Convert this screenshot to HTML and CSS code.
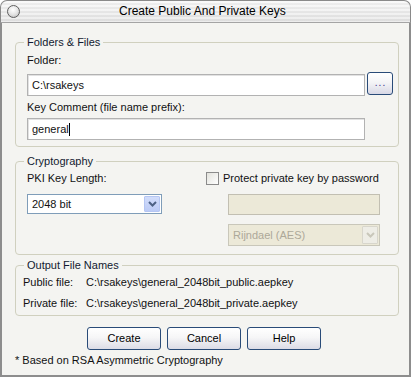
FILE: index.html
```html
<!DOCTYPE html>
<html>
<head>
<meta charset="utf-8">
<link rel="stylesheet" href="styles.css">
</head>
<body>
<div class="window">
  <div class="titlebar">
    <span class="orb"></span>
    <span class="title">Create Public And Private Keys</span>
  </div>
  <div class="content">
    <fieldset class="group g-files">
      <legend>Folders &amp; Files</legend>
      <div class="label l-folder">Folder:</div>
      <div class="row">
        <div class="input wide">C:\rsakeys</div>
        <div class="browse">...</div>
      </div>
      <div class="label l-comment">Key Comment (file name prefix):</div>
      <div class="input wide">general<span class="caret"></span></div>
    </fieldset>

    <fieldset class="group g-crypto">
      <legend>Cryptography</legend>
      <div class="cols">
        <div class="col-left">
          <div class="label">PKI Key Length:</div>
          <div class="select sel-len">
            <span class="sel-text">2048 bit</span>
            <span class="drop"><svg width="9" height="6" viewBox="0 0 9 6"><path d="M1 1 L4.5 4.5 L8 1" fill="none" stroke="#4d6185" stroke-width="2"/></svg></span>
          </div>
        </div>
        <div class="col-right">
          <div class="check"><span class="box"></span><span>Protect private key by password</span></div>
          <div class="input disabled pwd"></div>
          <div class="select disabled sel-alg">
            <span class="sel-text">Rijndael (AES)</span>
            <span class="drop"><svg width="9" height="6" viewBox="0 0 9 6"><path d="M1 1 L4.5 4.5 L8 1" fill="none" stroke="#c9c7ba" stroke-width="2"/></svg></span>
          </div>
        </div>
      </div>
    </fieldset>

    <fieldset class="group g-out">
      <legend>Output File Names</legend>
      <div class="out-row"><span class="out-label">Public file:</span><span>C:\rsakeys\general_2048bit_public.aepkey</span></div>
      <div class="out-row r2"><span class="out-label">Private file:</span><span>C:\rsakeys\general_2048bit_private.aepkey</span></div>
    </fieldset>

    <div class="buttons">
      <div class="btn">Create</div>
      <div class="btn">Cancel</div>
      <div class="btn">Help</div>
    </div>
    <div class="note">* Based on RSA Asymmetric Cryptography</div>
  </div>
</div>
</body>
</html>
```

FILE: styles.css
```css
* { box-sizing: border-box; }
html, body { margin: 0; padding: 0; background: #ffffff; }
body {
  font-family: "Liberation Sans", Arial, sans-serif;
  font-size: 11px;
  line-height: 13px;
  color: #111;
}
.window {
  width: 411px;
  height: 377px;
  display: flex;
  flex-direction: column;
}
.titlebar {
  height: 23px;
  flex: none;
  display: flex;
  align-items: center;
  padding-left: 6px;
  border: 1px solid #8a8a8a;
  border-bottom-color: #a4a4a4;
  border-radius: 7px 7px 0 0;
  background:
    linear-gradient(rgba(255,255,255,0.35), rgba(0,0,0,0.04)),
    repeating-linear-gradient(#f6f6f6 0 2px, #e6e6e6 2px 4px);
}
.orb {
  width: 13px;
  height: 13px;
  border-radius: 50%;
  border: 1.5px solid #5e5e5e;
  background: radial-gradient(circle at 45% 35%, #ffffff 0, #e4e4e4 50%, #b4b4b4 100%);
}
.title {
  margin-left: 99px;
  font-size: 12px;
  color: #000;
}
.content {
  flex: 1;
  border: 0 solid #8d8d8d;
  border-width: 0 2px 2px 2px;
  background: #f4f4f1;
  padding: 0 10px 0 13px;
}
.group {
  margin: 0;
  border: 1px solid #d0d0bf;
  border-radius: 4px;
  min-width: 0;
}
.group legend {
  padding: 0 3px;
  margin-left: -3px;
  line-height: 13px;
  color: #121a30;
}
.g-files {
  margin-top: 13px;
  padding: 5px 4px 6px 11px;
}
.label { height: 13px; }
.l-folder { margin-bottom: 5px; }
.l-comment { margin: 5px 0 4px; }
.row { display: flex; align-items: flex-start; }
.input {
  height: 22px;
  background: #fff;
  border: 1px solid #b2b2b2;
  box-shadow: inset 1px 1px 0 #e2e2e2;
  padding: 4px 4px 0 4px;
  white-space: nowrap;
}
.wide { width: 338px; }
.row .input { margin-top: 2px; }
.caret {
  display: inline-block;
  width: 1px;
  height: 13px;
  background: #000;
  vertical-align: -3px;
}
.browse {
  width: 26px;
  height: 23px;
  margin-left: 2px;
  border: 1px solid #294b78;
  border-radius: 3px;
  background: linear-gradient(#ffffff 0, #f4f4f6 45%, #d8d8e6 100%);
  color: #3c2f86;
  text-align: center;
  line-height: 20px;
  font-size: 10px;
  letter-spacing: 1px;
  padding-left: 1px;
}
.g-crypto {
  margin-top: 8px;
  padding: 4px 17px 8px 11px;
}
.cols {
  display: grid;
  grid-template-columns: 179px 1fr;
}
.col-left .label { margin-bottom: 9px; }
.select {
  display: flex;
  align-items: center;
  border: 1px solid #7f9db9;
  background: #fff;
  padding: 1px;
}
.sel-len { width: 135px; height: 20px; }
.sel-text { flex: 1; padding-left: 3px; }
.drop {
  width: 16px;
  align-self: stretch;
  display: flex;
  align-items: center;
  justify-content: center;
  background: linear-gradient(#d2ddfb, #bccbf6);
  border: 1px solid #b5c6f3;
  border-radius: 1px;
}
.check {
  display: flex;
  align-items: center;
  height: 13px;
  margin-bottom: 9px;
}
.box {
  width: 13px;
  height: 13px;
  border: 1px solid #8b8b8b;
  background: linear-gradient(135deg, #e2e2dc, #ffffff);
  margin-right: 4px;
}
.input.disabled {
  background: #ece9d8;
  border-color: #c2bfb2;
  box-shadow: none;
}
.pwd { width: 152px; height: 21px; margin-left: 22px; margin-bottom: 9px; }
.select.disabled {
  border-color: #c9c7ba;
  background: #ece9d8;
  color: #aca899;
}
.sel-alg { width: 152px; height: 22px; margin-left: 22px; }
.select.disabled .drop {
  background: #eeede6;
  border-color: #d8d6cc;
}
.g-out {
  margin-top: 4px;
  padding: 4px 17px 5px 7px;
}
.g-out legend { margin-left: 1px; }
.out-row { display: flex; height: 13px; white-space: nowrap; }
.out-row.r2 { margin-top: 8px; }
.out-label { width: 63px; flex: none; }
.buttons {
  display: flex;
  gap: 6px;
  margin-top: 11px;
  padding-left: 72px;
}
.btn {
  width: 74px;
  height: 23px;
  border: 1px solid #294b78;
  border-radius: 3px;
  background: linear-gradient(#ffffff 0, #f6f6f7 45%, #dcdce6 100%);
  text-align: center;
  line-height: 21px;
  color: #000;
}
.note { margin-top: 4px; }
```
